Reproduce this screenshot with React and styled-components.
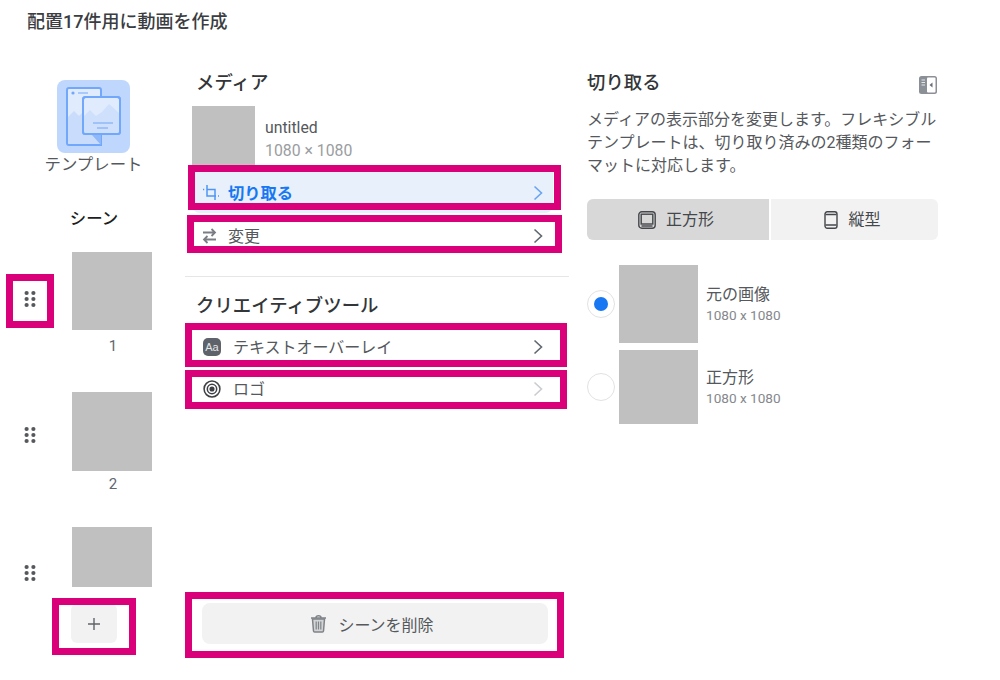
import React from 'react';
import styled, { createGlobalStyle } from 'styled-components';

const GlobalStyle = createGlobalStyle`
    html, body {
        margin: 0;
        padding: 0;
        background: #fff;
    }
    * {
        box-sizing: border-box;
    }
`;

const Chevron = ({ color = '#606770' }) => (
    <svg width="12" height="18" viewBox="0 0 12 18" fill="none" stroke={color} strokeWidth="1.6">
        <path d="M2.5 2.5 L9.5 9 L2.5 15.5" />
    </svg>
);

const Grip = () => (
    <svg width="12" height="18" viewBox="0 0 12 18" fill="#55585c">
        <circle cx="2.6" cy="3" r="2.1" />
        <circle cx="9.4" cy="3" r="2.1" />
        <circle cx="2.6" cy="9" r="2.1" />
        <circle cx="9.4" cy="9" r="2.1" />
        <circle cx="2.6" cy="15" r="2.1" />
        <circle cx="9.4" cy="15" r="2.1" />
    </svg>
);

const TemplateIcon = () => (
    <svg width="73" height="73" viewBox="0 0 73 73">
        <rect width="73" height="73" rx="8" fill="#bfd7fd" />
        <path d="M12 8 H42 a2 2 0 0 1 2 2 V65 H12 a2 2 0 0 1 -2 -2 V10 a2 2 0 0 1 2 -2 Z" fill="#e0ebfd" />
        <path d="M11 37 L17 31 L22 36 L27 31 L33 38 L43 46 V64 H12 L11 62 Z" fill="#c9dcfb" />
        <path d="M12 8 H42 a2 2 0 0 1 2 2 V65 H12 a2 2 0 0 1 -2 -2 V10 a2 2 0 0 1 2 -2 Z" fill="none" stroke="#72a8fb" strokeWidth="2" />
        <circle cx="16" cy="13" r="1.6" fill="#72a8fb" />
        <path d="M21 13 H31" stroke="#8fbafc" strokeWidth="1.4" />
        <path d="M35 55 H44 V65 Z" fill="#8fb8f8" />
        <rect x="26" y="17" width="37" height="37" rx="2.5" fill="#e0ebfd" stroke="#72a8fb" strokeWidth="2" />
        <path d="M27 36 L33 30 L39 36 L45 32 L52 24 L62 33 V53 H27 Z" fill="#cfe0fc" />
        <rect x="26" y="17" width="37" height="37" rx="2.5" fill="none" stroke="#72a8fb" strokeWidth="2" />
        <path d="M36 43 H56 M40 48 H51" stroke="#8fb8f8" strokeWidth="1.4" />
    </svg>
);

const CropIcon = () => (
    <svg width="18" height="18" viewBox="0 0 18 18" fill="none" stroke="#4f95f5" strokeWidth="1.5">
        <path d="M1 5.5 H2.2 M5 1 V12 H14 M5 5.5 H13 V16 M16 12 H17" />
    </svg>
);

const SwapIcon = () => (
    <svg width="15" height="16" viewBox="0 0 15 16" fill="none" stroke="#7a7e84" strokeWidth="1.8">
        <path d="M1 4.5 H13 M9.5 1 L13 4.5 L9.5 8 M14 11.5 H2 M5.5 8 L2 11.5 L5.5 15" />
    </svg>
);

const LogoIcon = () => (
    <svg width="18" height="18" viewBox="0 0 20 20" fill="none" stroke="#3c3f43" strokeWidth="1.7">
        <circle cx="10" cy="10" r="8.8" />
        <circle cx="10" cy="10" r="5.2" />
        <circle cx="10" cy="10" r="2" fill="#3c3f43" />
    </svg>
);

const PanelIcon = () => (
    <svg width="18" height="18" viewBox="0 0 18 18">
        <rect width="18" height="18" rx="2.5" fill="#8b8f96" />
        <rect x="8" y="1.5" width="8.5" height="15" rx="1" fill="#fff" />
        <path d="M2.5 4 H6 M2.5 6.5 H6 M2.5 9 H6" stroke="#e4e6e9" strokeWidth="1.2" />
        <path d="M13.5 6.5 V11.5 L10.5 9 Z" fill="#6b6f75" />
    </svg>
);

const SquareIcon = () => (
    <svg width="18" height="18" viewBox="0 0 18 18" fill="none" stroke="#44474b" strokeWidth="1.4">
        <rect x="0.8" y="0.8" width="16.4" height="16.4" rx="3" />
        <rect x="3.2" y="3.2" width="11.6" height="9.8" />
        <path d="M3.5 15 H14.5" />
    </svg>
);

const PortraitIcon = () => (
    <svg width="14" height="18" viewBox="0 0 14 18" fill="none" stroke="#44474b" strokeWidth="1.4">
        <rect x="1" y="0.8" width="12" height="16.4" rx="2.2" />
        <path d="M1.5 3.5 H12.5 M1.5 14 H12.5" />
    </svg>
);

const PlusIcon = () => (
    <svg width="14" height="14" viewBox="0 0 14 14" fill="none" stroke="#60646a" strokeWidth="1.4">
        <path d="M7 1 V13 M1 7 H13" />
    </svg>
);

const TrashIcon = () => (
    <svg width="17" height="19" viewBox="0 0 17 19" fill="none" stroke="#7f8388" strokeWidth="1.5">
        <path d="M1 4 H16 M6 3.5 C6 1 11 1 11 3.5" />
        <path d="M2.5 5 L3.5 17 C3.6 17.8 4 18 4.6 18 H12.4 C13 18 13.4 17.8 13.5 17 L14.5 5 Z" fill="#8a8d91" fillOpacity="0.3" />
        <path d="M6.2 7.5 V15.5 M8.5 7.5 V15.5 M10.8 7.5 V15.5" strokeWidth="1.2" />
    </svg>
);

const scenes = [
    { id: 1, height: 78, gripTop: 38, gap: 36, number: true, numberGap: 6 },
    { id: 2, height: 79, gripTop: 34, gap: 33, number: true, numberGap: 3 },
    { id: 3, height: 60, gripTop: 37, gap: 0, number: false, numberGap: 0 },
];

const highlights = [
    { x: 6, y: 274, w: 48, h: 54 },
    { x: 188, y: 165, w: 373, h: 45 },
    { x: 187, y: 215, w: 375, h: 38 },
    { x: 185, y: 323, w: 382, h: 44 },
    { x: 185, y: 370, w: 382, h: 39 },
    { x: 52, y: 598, w: 84, h: 57 },
    { x: 185, y: 592, w: 379, h: 66 },
];

export default function App() {
    return (
        <Page>
            <GlobalStyle />
            <Title>配置17件用に動画を作成</Title>
            <Columns>
                <SceneColumn>
                    <TemplateButton>
                        <TemplateIcon />
                        <TemplateLabel>テンプレート</TemplateLabel>
                    </TemplateButton>
                    <SceneHeading>シーン</SceneHeading>
                    <SceneList>
                        {scenes.map((s) => (
                            <SceneItem key={s.id} $gap={s.gap}>
                                <GripHandle $top={s.gripTop}>
                                    <Grip />
                                </GripHandle>
                                <div>
                                    <SceneThumb $height={s.height} />
                                    {s.number && <SceneNumber $gap={s.numberGap}>{s.id}</SceneNumber>}
                                </div>
                            </SceneItem>
                        ))}
                    </SceneList>
                    <AddButton>
                        <PlusIcon />
                    </AddButton>
                </SceneColumn>

                <MediaColumn>
                    <MediaHeading>メディア</MediaHeading>
                    <MediaRow>
                        <MediaThumb />
                        <MediaInfo>
                            <MediaName>untitled</MediaName>
                            <MediaSize>1080 × 1080</MediaSize>
                        </MediaInfo>
                    </MediaRow>
                    <CropRow>
                        <IconSlot>
                            <CropIcon />
                        </IconSlot>
                        <CropLabel>切り取る</CropLabel>
                        <Chevron color="#6aa3f3" />
                    </CropRow>
                    <ChangeRow>
                        <IconSlot>
                            <SwapIcon />
                        </IconSlot>
                        <RowLabel>変更</RowLabel>
                        <Chevron />
                    </ChangeRow>
                    <Divider />
                    <ToolHeading>クリエイティブツール</ToolHeading>
                    <ToolList>
                        <ToolRow>
                            <ToolIcon>
                                <AaBadge>Aa</AaBadge>
                            </ToolIcon>
                            <RowLabel>テキストオーバーレイ</RowLabel>
                            <Chevron />
                        </ToolRow>
                        <ToolRow>
                            <ToolIcon>
                                <LogoIcon />
                            </ToolIcon>
                            <RowLabel>ロゴ</RowLabel>
                            <Chevron color="#c9ccd0" />
                        </ToolRow>
                    </ToolList>
                    <DeleteButton>
                        <TrashIcon />
                        シーンを削除
                    </DeleteButton>
                </MediaColumn>

                <CropColumn>
                    <CropHeader>
                        <Heading>切り取る</Heading>
                        <PanelSlot>
                            <PanelIcon />
                        </PanelSlot>
                    </CropHeader>
                    <Description>
                        メディアの表示部分を変更します。フレキシブルテンプレートは、切り取り済みの2種類のフォーマットに対応します。
                    </Description>
                    <Segments>
                        <Segment $active>
                            <SquareIcon />
                            <SegmentText>正方形</SegmentText>
                        </Segment>
                        <Segment>
                            <PortraitIcon />
                            <SegmentText>縦型</SegmentText>
                        </Segment>
                    </Segments>
                    <OptionList>
                        <Option>
                            <Radio $checked />
                            <OptionThumb $height={78} />
                            <OptionText>
                                <OptionName>元の画像</OptionName>
                                <OptionSize>1080 x 1080</OptionSize>
                            </OptionText>
                        </Option>
                        <Option>
                            <Radio />
                            <OptionThumb $height={74} />
                            <OptionText>
                                <OptionName>正方形</OptionName>
                                <OptionSize>1080 x 1080</OptionSize>
                            </OptionText>
                        </Option>
                    </OptionList>
                </CropColumn>
            </Columns>
            {highlights.map((h) => (
                <Highlight key={`${h.x}-${h.y}`} $x={h.x} $y={h.y} $w={h.w} $h={h.h} />
            ))}
        </Page>
    );
}

const Page = styled.div`
    position: relative;
    width: 1000px;
    height: 680px;
    overflow: hidden;
    background: #fff;
    color: #444950;
    font-family: Roboto, "Noto Sans CJK JP", sans-serif;
`;

const Title = styled.div`
    height: 70px;
    padding: 12px 0 0 27px;
    font-size: 18px;
    line-height: 20px;
    font-weight: 500;
    color: #3a3d41;
`;

const Columns = styled.div`
    display: grid;
    grid-template-columns: 185px 384px 351px;
    height: 610px;
`;

const SceneColumn = styled.div`
    display: flex;
    flex-direction: column;
`;

const TemplateButton = styled.div`
    display: flex;
    flex-direction: column;
    align-items: center;
    width: 187px;
    margin-top: 10px;
`;

const TemplateLabel = styled.div`
    margin-top: 2px;
    font-size: 16.4px;
    line-height: 20px;
    color: #55585c;
`;

const SceneHeading = styled.div`
    width: 188px;
    margin-top: 34px;
    text-align: center;
    font-size: 16.4px;
    line-height: 20px;
    font-weight: 500;
    color: #1c1e21;
`;

const SceneList = styled.div`
    display: flex;
    flex-direction: column;
    margin-top: 23px;
    padding-left: 24px;
`;

const SceneItem = styled.div`
    display: grid;
    grid-template-columns: 12px 80px;
    column-gap: 36px;
    margin-bottom: ${(p) => p.$gap}px;
`;

const GripHandle = styled.div`
    display: flex;
    margin-top: ${(p) => p.$top}px;
    height: 18px;
`;

const SceneThumb = styled.div`
    width: 80px;
    height: ${(p) => p.$height}px;
    background: #c0c0c0;
`;

const SceneNumber = styled.div`
    margin-top: ${(p) => p.$gap}px;
    padding-left: 2px;
    text-align: center;
    font-size: 15px;
    line-height: 20px;
    color: #606770;
`;

const AddButton = styled.div`
    display: flex;
    align-items: center;
    justify-content: center;
    width: 46px;
    height: 39px;
    margin: 17px 0 0 71px;
    border-radius: 6px;
    background: #f2f2f2;
`;

const MediaColumn = styled.div`
    display: flex;
    flex-direction: column;
    padding-bottom: 36px;
`;

const Heading = styled.div`
    padding-top: 1px;
    font-size: 18.4px;
    line-height: 24px;
    font-weight: 500;
    color: #333639;
`;

const MediaHeading = styled(Heading)`
    padding-left: 11px;
`;

const MediaRow = styled.div`
    display: flex;
    margin: 11px 0 0 7px;
`;

const MediaThumb = styled.div`
    width: 63px;
    height: 59px;
    background: #c0c0c0;
`;

const MediaInfo = styled.div`
    margin-left: 10px;
    padding-top: 11px;
`;

const MediaName = styled.div`
    font-size: 15.8px;
    line-height: 22px;
    color: #55585c;
`;

const MediaSize = styled.div`
    margin-top: 1px;
    font-size: 15.8px;
    line-height: 22px;
    color: #9a9da1;
`;

const CropRow = styled.div`
    display: flex;
    align-items: center;
    height: 48px;
    margin: 0 16px 0 7px;
    padding: 8px 9px 0 10px;
    border-radius: 0 0 8px 8px;
    background: #e7f0fb;
`;

const IconSlot = styled.div`
    display: flex;
    align-items: center;
    width: 26px;
`;

const CropLabel = styled.div`
    flex: 1;
    padding-bottom: 2px;
    font-size: 16.3px;
    font-weight: 700;
    color: #1877f2;
`;

const RowLabel = styled.div`
    flex: 1;
    padding-bottom: 3px;
    font-size: 16px;
    color: #55585c;
`;

const ChangeRow = styled.div`
    display: flex;
    align-items: center;
    height: 46px;
    margin: 0 16px 0 7px;
    padding: 0 9px 0 10px;
`;

const Divider = styled.div`
    height: 1px;
    margin-top: 17px;
    background: #e6e6e6;
`;

const ToolHeading = styled(Heading)`
    margin-top: 16px;
    padding-left: 11px;
`;

const ToolList = styled.div`
    display: flex;
    flex-direction: column;
    margin-top: 8px;
`;

const ToolRow = styled.div`
    display: flex;
    align-items: center;
    height: 42px;
    margin-right: 16px;
    padding: 0 9px 0 18px;
`;

const ToolIcon = styled.div`
    display: flex;
    align-items: center;
    width: 30px;
`;

const AaBadge = styled.div`
    width: 18px;
    height: 18px;
    border-radius: 5px;
    background: #5e636b;
    color: #e4e6e9;
    font-family: "Liberation Sans", sans-serif;
    font-size: 11px;
    line-height: 18px;
    text-align: center;
`;

const DeleteButton = styled.div`
    display: flex;
    align-items: center;
    justify-content: center;
    gap: 11px;
    height: 41px;
    margin: auto 21px 0 17px;
    padding-right: 6px;
    border-radius: 8px;
    background: #f2f2f2;
    font-size: 16px;
    color: #55585c;
`;

const CropColumn = styled.div`
    display: flex;
    flex-direction: column;
    padding-left: 18px;
    width: 369px;
`;

const CropHeader = styled.div`
    display: flex;
    align-items: center;
    justify-content: space-between;
    padding-right: 1px;
`;

const PanelSlot = styled.div`
    display: flex;
    margin-top: 4px;
`;

const Description = styled.div`
    margin-top: 13px;
    font-size: 16px;
    line-height: 23px;
    color: #55585c;
`;

const Segments = styled.div`
    display: grid;
    grid-template-columns: 182px 167px;
    column-gap: 2px;
    margin-top: 22px;
`;

const Segment = styled.div`
    display: flex;
    align-items: center;
    justify-content: center;
    gap: 10px;
    height: 41px;
    padding-right: 4px;
    font-size: 16px;
    color: #44474b;
    background: ${(p) => (p.$active ? '#d8d8d8' : '#f2f2f2')};
    border-radius: ${(p) => (p.$active ? '6px 0 0 6px' : '0 6px 6px 0')};
`;

const SegmentText = styled.span`
    padding-bottom: 3px;
`;

const OptionList = styled.div`
    display: flex;
    flex-direction: column;
    gap: 7px;
    margin-top: 25px;
`;

const Option = styled.div`
    display: flex;
    align-items: center;
`;

const Radio = styled.div`
    display: flex;
    align-items: center;
    justify-content: center;
    width: 28px;
    height: 28px;
    margin-right: 4px;
    border-radius: 50%;
    border: 1px solid #e2e2e2;
    background: #fff;
    &::after {
        content: '';
        display: ${(p) => (p.$checked ? 'block' : 'none')};
        width: 14px;
        height: 14px;
        border-radius: 50%;
        background: #1877f2;
    }
`;

const OptionThumb = styled.div`
    width: 79px;
    height: ${(p) => p.$height}px;
    margin-right: 8px;
    background: #c0c0c0;
`;

const OptionText = styled.div`
    padding-top: 2px;
`;

const OptionName = styled.div`
    font-size: 16px;
    line-height: 20px;
    color: #55585c;
`;

const OptionSize = styled.div`
    font-size: 13.6px;
    line-height: 20px;
    color: #85888d;
`;

const Highlight = styled.div`
    position: absolute;
    left: ${(p) => p.$x}px;
    top: ${(p) => p.$y}px;
    width: ${(p) => p.$w}px;
    height: ${(p) => p.$h}px;
    border: 7px solid #d9007a;
    pointer-events: none;
`;
